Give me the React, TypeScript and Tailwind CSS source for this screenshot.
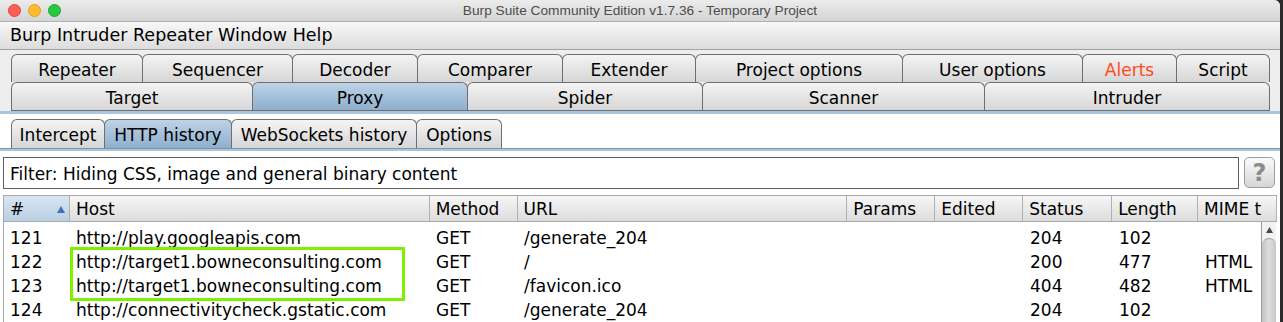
import React from "react";

const F = "font-['DejaVu_Sans',sans-serif]";

const row1 = [
  { t: "Repeater", w: 131 },
  { t: "Sequencer", w: 150 },
  { t: "Decoder", w: 125 },
  { t: "Comparer", w: 145 },
  { t: "Extender", w: 133 },
  { t: "Project options", w: 207 },
  { t: "User options", w: 180 },
  { t: "Alerts", w: 94, alert: true },
  { t: "Script", w: 93 },
];
const row2 = [
  { t: "Target", w: 241 },
  { t: "Proxy", w: 215, sel: true },
  { t: "Spider", w: 235 },
  { t: "Scanner", w: 282 },
  { t: "Intruder", w: 285 },
];
const sub = [
  { t: "Intercept", w: 93 },
  { t: "HTTP history", w: 127, sel: true },
  { t: "WebSockets history", w: 185 },
  { t: "Options", w: 85 },
];

const cols = [
  { t: "#", w: 66 },
  { t: "Host", w: 360 },
  { t: "Method", w: 88 },
  { t: "URL", w: 330 },
  { t: "Params", w: 88 },
  { t: "Edited", w: 88 },
  { t: "Status", w: 89 },
  { t: "Length", w: 86 },
  { t: "MIME t", w: 79 },
];

const rows = [
  ["121", "http://play.googleapis.com", "GET", "/generate_204", "", "", "204", "102", ""],
  ["122", "http://target1.bowneconsulting.com", "GET", "/", "", "", "200", "477", "HTML"],
  ["123", "http://target1.bowneconsulting.com", "GET", "/favicon.ico", "", "", "404", "482", "HTML"],
  ["124", "http://connectivitycheck.gstatic.com", "GET", "/generate_204", "", "", "204", "102", ""],
];

function Tab({ t, w, sel, alert }: { t: string; w: number; sel?: boolean; alert?: boolean }) {
  return (
    <div
      style={{ width: w + 1 }}
      className={`-ml-px first:ml-0 h-full flex items-center justify-center pt-[3px] border border-b-0 border-[#6f6f6f] rounded-t-[6px] text-[17px] leading-none ${
        sel
          ? "bg-gradient-to-b from-[#bed3e7] to-[#8eafcd]"
          : "bg-gradient-to-b from-[#f4f4f4] to-[#d6d6d6]"
      } ${alert ? "text-[#ff4a1c]" : "text-black"}`}
    >
      {t}
    </div>
  );
}

export default function App() {
  return (
    <div className={`w-[1283px] h-[322px] overflow-hidden flex bg-[#2b2b2b] ${F}`}>
      <div className="w-[1280px] h-full flex flex-col bg-white rounded-tr-[6px] overflow-hidden">
        {/* Title bar */}
        <div className="h-[22px] shrink-0 relative flex items-center bg-gradient-to-b from-[#ececec] to-[#d4d4d4] border-b border-[#b3b3b3]">
          <div className="flex items-center gap-[7px] pl-[8px]">
            <div className="w-[13px] h-[13px] rounded-full bg-[#fc5f57] border border-[#e0443e]" />
            <div className="w-[13px] h-[13px] rounded-full bg-[#fdbc2e] border border-[#dea123]" />
            <div className="w-[13px] h-[13px] rounded-full bg-[#28c840] border border-[#1aab29]" />
          </div>
          <div className="absolute inset-0 flex items-center justify-center font-['Liberation_Sans',sans-serif] text-[13.7px] text-[#4d4d4d] leading-none">
            Burp Suite Community Edition v1.7.36 - Temporary Project
          </div>
        </div>
        {/* Menu */}
        <div className="h-[28px] shrink-0 flex items-center pl-[10px] pt-[1px] bg-gradient-to-b from-[#f8f8f8] to-[#dcdcdc] border-b border-[#a2a2a2] text-[17.5px] text-black leading-none">
          <span>Burp Intruder Repeater Window Help</span>
        </div>
        {/* Main tabs */}
        <div className="shrink-0 bg-[#eeeeee] pt-[4px] pl-[11px]">
          <div className="flex h-[28px]">
            {row1.map((x) => (
              <Tab key={x.t} {...x} />
            ))}
          </div>
          <div className="flex h-[29px] border-b border-[#6f6f6f] w-[1259px]">
            {row2.map((x) => (
              <Tab key={x.t} {...x} />
            ))}
          </div>
        </div>
        <div className="h-[3px] shrink-0 bg-[#a9c5df]" />
        {/* Sub tabs */}
        <div className="shrink-0 pt-[5px] pl-[11px] bg-white">
          <div className="flex h-[29px]">
            {sub.map((x) => (
              <Tab key={x.t} {...x} />
            ))}
          </div>
        </div>
        <div className="h-[3px] shrink-0 bg-[#a9c5df] border-t border-[#7f93a8]" />
        {/* Filter */}
        <div className="shrink-0 flex items-start pt-[6px] pl-[3px] gap-[5px]">
          <div className="w-[1236px] h-[32px] border border-[#5e5e5e] bg-white flex items-center pl-[6px] pt-[2px] text-[17px] text-black leading-none">
            Filter: Hiding CSS, image and general binary content
          </div>
          <div className="w-[31px] h-[31px] rounded-[5px] border border-[#9c9c9c] bg-gradient-to-b from-[#fbfbfb] to-[#d6d6d6] flex items-center justify-center text-[24px] font-bold text-[#8c8c8c] leading-none">
            ?
          </div>
        </div>
        {/* Table */}
        <div className="mt-[6px] mx-[3px] flex-1 flex flex-col border-l border-[#a8a8a8] relative">
          <div className="h-[27px] shrink-0 flex bg-gradient-to-b from-[#f7f7f7] to-[#dcdcdc] border-t border-b border-[#a9a9a9]">
            {cols.map((c, i) => (
              <div
                key={c.t}
                style={{ width: c.w }}
                className={`h-full flex items-center pl-[6px] pt-[1px] text-[17px] leading-none text-black border-r border-[#b1b1b1] whitespace-nowrap overflow-hidden ${
                  i === 0 ? "bg-gradient-to-b from-[#d9e6f2] to-[#b9cfe4] justify-between pr-[4px]" : ""
                }`}
              >
                <span>{c.t}</span>
                {i === 0 && (
                  <svg width="8" height="7" viewBox="0 0 8 7">
                    <path d="M4 0 L8 7 L0 7 Z" fill="#3b74b4" />
                  </svg>
                )}
              </div>
            ))}
          </div>
          <div className="flex-1 flex relative">
            <div className="flex-1 pt-[4px]">
              {rows.map((r) => (
                <div key={r[0]} className="h-[24px] flex items-center">
                  {r.map((v, i) => (
                    <div
                      key={i}
                      style={{ width: cols[i].w }}
                      className="shrink-0 pl-[6px] text-[17px] leading-[22px] text-black whitespace-nowrap"
                    >
                      {v}
                    </div>
                  ))}
                </div>
              ))}
            </div>
            {/* scrollbar */}
            <div className="absolute right-[1px] top-0 bottom-0 w-[15px] border-l border-[#9a9a9a] bg-[#f2f2f2] flex flex-col items-center">
              <svg width="7" height="6" viewBox="0 0 7 6" className="mt-[5px]">
                <path d="M3.5 0 L7 6 L0 6 Z" fill="#4a4a4a" />
              </svg>
              <div className="mt-[5px] w-full flex-1 rounded-t-[8px] border-t border-[#9a9a9a] bg-gradient-to-r from-[#c4c4c4] via-[#dedede] to-[#c8c8c8]" />
            </div>
            {/* annotation */}
            <div className="absolute left-[66px] top-[25px] w-[335px] h-[54px] border-[3px] border-[#7ff000]" />
          </div>
        </div>
      </div>
      <div className="flex-1 bg-[#2b2b2b]" />
    </div>
  );
}
